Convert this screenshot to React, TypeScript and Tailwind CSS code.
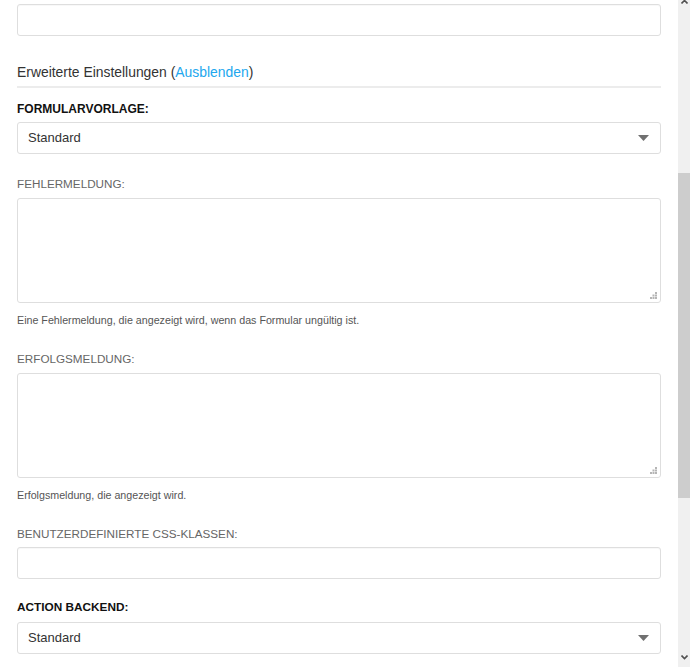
import React from "react";

const font = { fontFamily: '"Liberation Sans", Arial, sans-serif' };

function Caret() {
  return (
    <svg width="11" height="6" viewBox="0 0 11 6" className="shrink-0">
      <path d="M0 0 L11 0 L5.5 6 Z" fill="#707070" />
    </svg>
  );
}

function Grip() {
  return (
    <svg width="7" height="7" viewBox="0 0 7 7" className="absolute bottom-[3px] right-[3px]">
      <rect x="5" y="0" width="2" height="2" fill="#b5b5b5" />
      <rect x="2.5" y="2.5" width="2" height="2" fill="#b5b5b5" />
      <rect x="5" y="2.5" width="2" height="2" fill="#b5b5b5" />
      <rect x="0" y="5" width="2" height="2" fill="#b5b5b5" />
      <rect x="2.5" y="5" width="2" height="2" fill="#b5b5b5" />
      <rect x="5" y="5" width="2" height="2" fill="#b5b5b5" />
    </svg>
  );
}

function Field() {
  return <div className="h-[32px] w-full rounded-[3px] border border-[#dedede] bg-white shadow-[inset_0_1px_1px_rgba(0,0,0,0.03)]" />;
}

function Select() {
  return (
    <div className="flex h-[32px] w-full items-center justify-between rounded-[3px] border border-[#dedede] bg-white pl-[10px] pr-[11px] text-[13px] text-[#333]">
      <span>Standard</span>
      <Caret />
    </div>
  );
}

function Area() {
  return <div className="relative h-[105px] w-full rounded-[3px] border border-[#dedede] bg-white"><Grip /></div>;
}

export default function App() {
  return (
    <div className="flex h-[667px] w-[690px] overflow-hidden bg-white" style={font}>
      <div className="flex-1 px-[17px] pt-[4px]">
        <Field />
        <div className="mt-[26px] border-b-2 border-[#ececec] pb-[4px] text-[13.9px] leading-[20px] text-[#333]">
          Erweiterte Einstellungen (<span className="text-[#22a7ee]">Ausblenden</span>)
        </div>
        <div className="mb-[5px] mt-[13px] text-[12px] font-bold leading-[16px] text-[#111]">FORMULARVORLAGE:</div>
        <Select />
        <div className="mb-[6px] mt-[22px] text-[11.7px] leading-[16px] text-[#666]">FEHLERMELDUNG:</div>
        <Area />
        <div className="mt-[10px] text-[10.7px] leading-[15px] text-[#555]">
          Eine Fehlermeldung, die angezeigt wird, wenn das Formular ungültig ist.
        </div>
        <div className="mb-[6px] mt-[23px] text-[11.7px] leading-[16px] text-[#666]">ERFOLGSMELDUNG:</div>
        <Area />
        <div className="mt-[10px] text-[10.7px] leading-[15px] text-[#555]">Erfolgsmeldung, die angezeigt wird.</div>
        <div className="mb-[5px] mt-[23px] text-[11.7px] leading-[16px] text-[#666]">BENUTZERDEFINIERTE CSS-KLASSEN:</div>
        <Field />
        <div className="mb-[7px] mt-[20px] text-[11.8px] font-bold leading-[16px] text-[#111]">ACTION BACKEND:</div>
        <Select />
      </div>
      <div className="relative flex w-[12px] flex-col bg-[#f0f0f0]">
        <svg width="7" height="5" viewBox="0 0 7 5" className="absolute left-[2.5px] top-[-1px]">
          <path d="M0.5 4.5 L3.5 1.5 L6.5 4.5" fill="none" stroke="#505050" strokeWidth="1.6" />
        </svg>
        <div className="mt-[173px] h-[325px] w-full bg-[#cdcdcd]" />
        <svg width="7" height="5" viewBox="0 0 7 5" className="absolute bottom-[7px] left-[2.5px]">
          <path d="M0.5 0.5 L3.5 3.5 L6.5 0.5" fill="none" stroke="#505050" strokeWidth="1.6" />
        </svg>
      </div>
    </div>
  );
}
